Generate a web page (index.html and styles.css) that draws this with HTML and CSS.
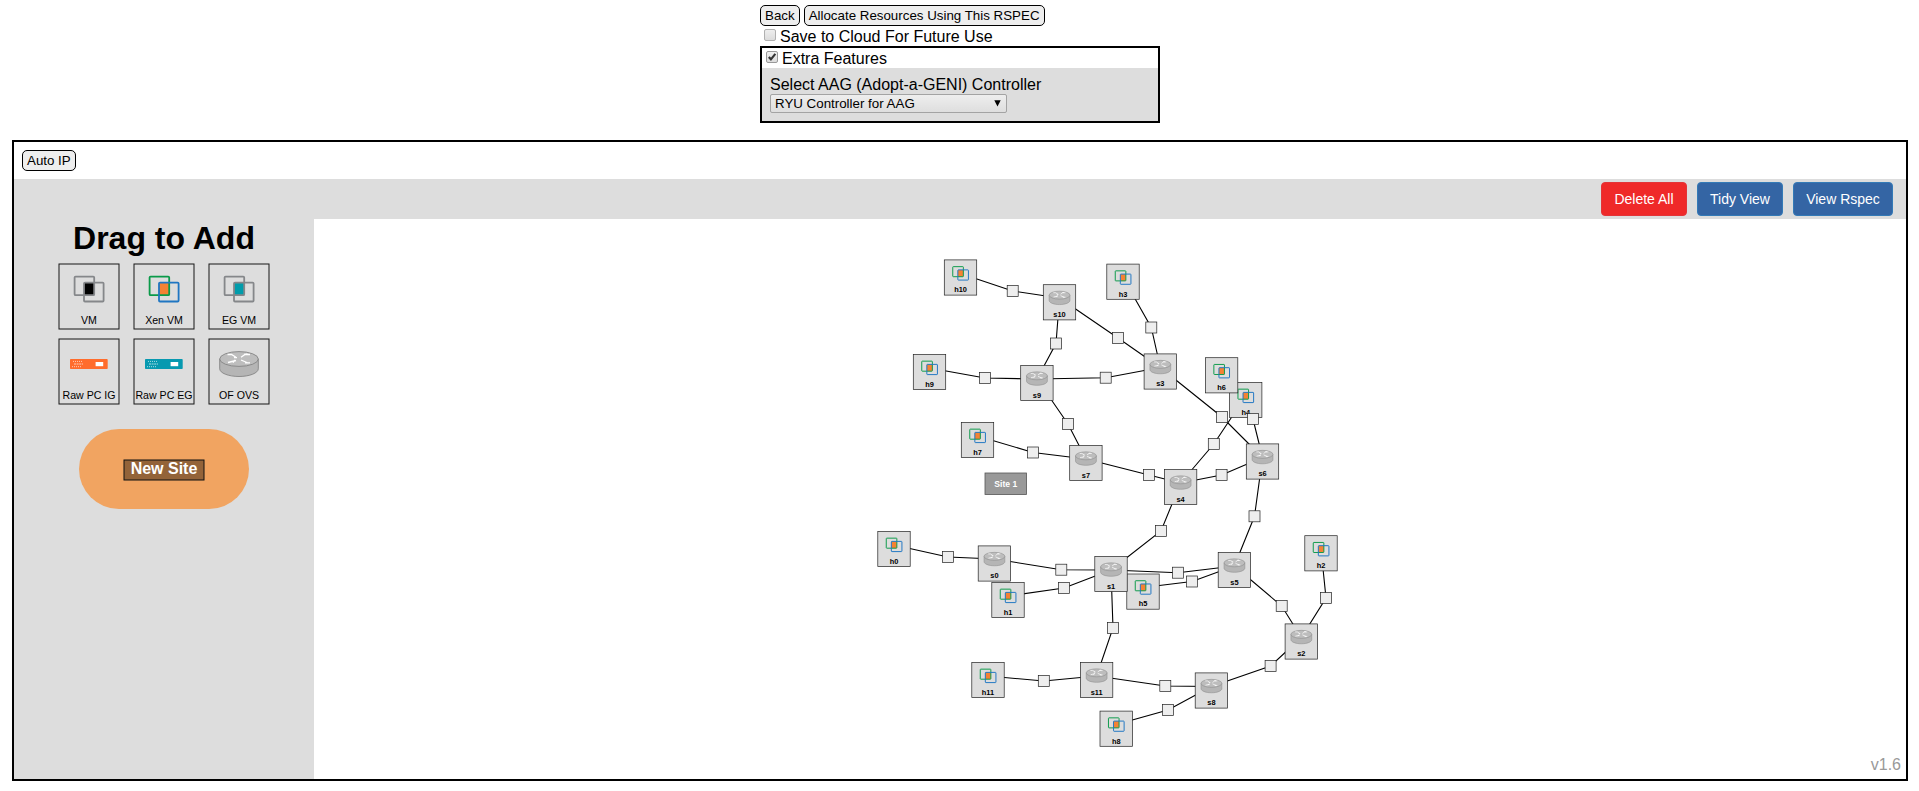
FILE: index.html
```html
<!DOCTYPE html>
<html lang="en">
<head>
<meta charset="utf-8">
<title>Topology Editor</title>
<link rel="stylesheet" href="styles.css">
</head>
<body>
<svg class="defs" aria-hidden="true">
  <defs>
    <g id="vm">
      <path d="M26 19.6h10.2v12.6H26z" fill="#000"/>
      <g fill="none" stroke="#85878a" stroke-width="1.8"><rect x="16.6" y="13.6" width="19.6" height="18.6" rx="1"/><rect x="26" y="19.6" width="19.6" height="18.9" rx="1"/></g>
    </g>
    <g id="egvm">
      <path d="M26 19.6h10.2v12.6H26z" fill="#009cab"/>
      <g fill="none" stroke="#85878a" stroke-width="1.8"><rect x="16.6" y="13.6" width="19.6" height="18.6" rx="1"/><rect x="26" y="19.6" width="19.6" height="18.9" rx="1"/></g>
    </g>
    <g id="xen">
      <path d="M26 19.6h10.2v12.6H26z" fill="#f58233"/>
      <g fill="none" stroke-width="1.8"><rect x="16.6" y="13.6" width="19.6" height="18.6" rx="1" stroke="#0a9a49"/><rect x="26" y="19.6" width="19.6" height="18.9" rx="1" stroke="#1f76c2"/></g>
    </g>
    <g id="rawpc">
      <rect x="12" y="21" width="37.7" height="10" rx=".8"/>
      <rect x="37.6" y="24" width="7.6" height="4.2" fill="#fff"/>
      <g stroke="#fff" stroke-width="1" opacity=".65"><path d="M15 23.4h9" stroke-dasharray="1 1"/><path d="M16 26h9" stroke-dasharray="2 .6"/><path d="M14 28.7h9" stroke-dasharray="1 1"/></g>
    </g>
    <g id="router">
      <path d="M11.7 21v9.8c0 4.2 8.7 7.7 19.3 7.7s19.3-3.500 19.300-7.700V21z" fill="#b5b5b5" stroke="#858585" stroke-width=".9"/>
      <ellipse cx="31" cy="21" rx="19.300" ry="7.400" fill="#bdbdbd" stroke="#858585" stroke-width=".9"/>
      <g fill="none" stroke="#fff" stroke-width="1.300"><path d="M19.500 16.500h4l4.500 2.800M26 19.600h3M42 16.500h-5l-4 2.800M39.500 16l-3.500.3M20 24.500l8-2M27 21.800l-2 2.800M33 22l7 3M42 24.800h-5"/></g>
    </g>
    <g id="host-node">
      <rect x="-16.200" y="-17.600" width="32.400" height="35.200" class="node-box"/>
      <use href="#xen" transform="translate(-16.700 -18.200) scale(.54)"/>
    </g>
    <g id="switch-node">
      <rect x="-16.200" y="-17.600" width="32.400" height="35.200" class="node-box"/>
      <use href="#router" transform="translate(-16.700 -18.500) scale(.54)"/>
    </g>
    <rect id="lk" x="-5.500" y="-5.500" width="11" height="11" class="link-box"/>
  </defs>
</svg>

<section class="options">
  <div class="actions"><button class="btn">Back</button><button class="btn">Allocate Resources Using This RSPEC</button></div>
  <label class="save"><span class="check"></span>Save to Cloud For Future Use</label>
  <div class="extra">
    <label class="extra-head"><span class="check"><svg viewBox="0 0 12 12"><path d="M2.200 6l2.500 2.800L10 2.200" fill="none" stroke="#333" stroke-width="2.600"/></svg></span>Extra Features</label>
    <div class="extra-body">
      <div class="extra-title">Select AAG (Adopt-a-GENI) Controller</div>
      <div class="select"><span>RYU Controller for AAG</span><svg width="7" height="7" viewBox="0 0 7 7"><path d="M.3.3h6.400L3.500 6.500z"/></svg></div>
    </div>
  </div>
</section>

<main class="editor">
  <div class="auto"><button class="btn">Auto IP</button></div>
  <div class="toolbar">
    <button class="tool danger">Delete All</button>
    <button class="tool">Tidy View</button>
    <button class="tool wide">View Rspec</button>
  </div>
  <div class="work">
    <aside class="sidebar">
      <h1>Drag to Add</h1>
      <div class="palette">
        <svg class="tile" viewBox="0 0 62 67"><rect x="1" y="1" width="60" height="65"/><use href="#vm"/><text x="31" y="60.700">VM</text></svg>
        <svg class="tile" viewBox="0 0 62 67"><rect x="1" y="1" width="60" height="65"/><use href="#xen"/><text x="31" y="60.700">Xen VM</text></svg>
        <svg class="tile" viewBox="0 0 62 67"><rect x="1" y="1" width="60" height="65"/><use href="#egvm"/><text x="31" y="60.700">EG VM</text></svg>
        <svg class="tile" viewBox="0 0 62 67"><rect x="1" y="1" width="60" height="65"/><use href="#rawpc" fill="#ff6c2c"/><text x="31" y="60.700">Raw PC IG</text></svg>
        <svg class="tile" viewBox="0 0 62 67"><rect x="1" y="1" width="60" height="65"/><use href="#rawpc" fill="#0799b0"/><text x="31" y="60.700">Raw PC EG</text></svg>
        <svg class="tile" viewBox="0 0 62 67"><rect x="1" y="1" width="60" height="65"/><use href="#router"/><text x="31" y="60.700">OF OVS</text></svg>
      </div>
      <div class="site"><svg width="82" height="22" viewBox="0 0 82 22"><rect x="1" y="1" width="80" height="20"/><text x="41" y="14.500">New Site</text></svg></div>
    </aside>
    <div class="canvas">
      <svg class="graph" viewBox="314 219 1592 560">
        <g class="links">
          <path d="M960.500 273.500L1012.700 291L1059.500 298"/>
          <path d="M1059.500 298L1056 343.500L1037 379"/>
          <path d="M929.500 368L985 378L1037 379"/>
          <path d="M1037 379L1105.700 377.700L1160.300 367.500"/>
          <path d="M1059.500 298L1118 338L1160.300 367.500"/>
          <path d="M1123 277.500L1151.300 327.500L1160.300 367.500"/>
          <path d="M1037 379L1068 424L1086 459"/>
          <path d="M977.500 436L1033 452.500L1086 459"/>
          <path d="M1086 459L1149 475L1180.600 483"/>
          <path d="M1180.600 483L1221.600 475L1262.500 457.500"/>
          <path d="M1160.300 367.500L1222 417L1262.500 457.500"/>
          <path d="M1180.600 483L1213.800 444L1245.700 396"/>
          <path d="M1221.600 371L1253 419L1262.500 457.500"/>
          <path d="M1180.600 483L1161 531L1111 570"/>
          <path d="M1262.500 457.500L1254.500 516.300L1234.400 566"/>
          <path d="M894 545L948 557L994.400 559"/>
          <path d="M994.400 559L1061.300 569.700L1111 570"/>
          <path d="M1008 596L1064 588L1111 570"/>
          <path d="M1111 570L1178 572.700L1234.400 566"/>
          <path d="M1143 587.500L1192 581.500L1234.400 566"/>
          <path d="M1234.400 566L1281.700 606L1301.300 637.500"/>
          <path d="M1321 549L1326 598L1301.300 637.500"/>
          <path d="M1301.300 637.500L1270.600 666L1211.400 686.500"/>
          <path d="M1211.400 686.500L1165.300 686L1096.600 676"/>
          <path d="M1211.400 686.500L1168 710L1116.200 724.500"/>
          <path d="M1111 570L1113 628L1096.600 676"/>
          <path d="M988 676L1043.800 681L1096.600 676"/>
        </g>
        <g class="nodes">
          <g transform="translate(960.500 277.500)"><use href="#host-node"/><text y="14.900">h10</text></g>
          <g transform="translate(929.500 372)"><use href="#host-node"/><text y="14.900">h9</text></g>
          <g transform="translate(1123 281.700)"><use href="#host-node"/><text y="14.900">h3</text></g>
          <g transform="translate(1245.700 400)"><use href="#host-node"/><text y="14.900">h4</text></g>
          <g transform="translate(1221.600 375.300)"><use href="#host-node"/><text y="14.900">h6</text></g>
          <g transform="translate(977.500 440)"><use href="#host-node"/><text y="14.900">h7</text></g>
          <g transform="translate(894 549)"><use href="#host-node"/><text y="14.900">h0</text></g>
          <g transform="translate(1008 600)"><use href="#host-node"/><text y="14.900">h1</text></g>
          <g transform="translate(1143 591.600)"><use href="#host-node"/><text y="14.900">h5</text></g>
          <g transform="translate(1321 553.300)"><use href="#host-node"/><text y="14.900">h2</text></g>
          <g transform="translate(988 680)"><use href="#host-node"/><text y="14.900">h11</text></g>
          <g transform="translate(1116.200 728.700)"><use href="#host-node"/><text y="14.900">h8</text></g>
          <g transform="translate(1059.500 302.300)"><use href="#switch-node"/><text y="14.900">s10</text></g>
          <g transform="translate(1036.900 383)"><use href="#switch-node"/><text y="14.900">s9</text></g>
          <g transform="translate(1160.300 371.500)"><use href="#switch-node"/><text y="14.900">s3</text></g>
          <g transform="translate(1262.500 461.500)"><use href="#switch-node"/><text y="14.900">s6</text></g>
          <g transform="translate(1180.600 487)"><use href="#switch-node"/><text y="14.900">s4</text></g>
          <g transform="translate(1085.900 463)"><use href="#switch-node"/><text y="14.900">s7</text></g>
          <g transform="translate(994.400 563.500)"><use href="#switch-node"/><text y="14.900">s0</text></g>
          <g transform="translate(1111 574)"><use href="#switch-node"/><text y="14.900">s1</text></g>
          <g transform="translate(1234.400 570)"><use href="#switch-node"/><text y="14.900">s5</text></g>
          <g transform="translate(1301.300 641.500)"><use href="#switch-node"/><text y="14.900">s2</text></g>
          <g transform="translate(1096.600 680)"><use href="#switch-node"/><text y="14.900">s11</text></g>
          <g transform="translate(1211.400 690.500)"><use href="#switch-node"/><text y="14.900">s8</text></g>
        </g>
        <use href="#lk" x="1012.700" y="291"/><use href="#lk" x="1056" y="343.500"/><use href="#lk" x="985" y="378"/>
        <use href="#lk" x="1105.700" y="377.700"/><use href="#lk" x="1118" y="338"/><use href="#lk" x="1151.300" y="327.500"/>
        <use href="#lk" x="1068" y="424"/><use href="#lk" x="1033" y="452.500"/><use href="#lk" x="1149" y="475"/>
        <use href="#lk" x="1221.600" y="475"/><use href="#lk" x="1222" y="417"/><use href="#lk" x="1213.800" y="444"/>
        <use href="#lk" x="1253" y="419"/><use href="#lk" x="1161" y="531"/><use href="#lk" x="1254.500" y="516.300"/>
        <use href="#lk" x="948" y="557"/><use href="#lk" x="1061.300" y="569.700"/><use href="#lk" x="1064" y="588"/>
        <use href="#lk" x="1178" y="572.700"/><use href="#lk" x="1192" y="581.500"/><use href="#lk" x="1281.700" y="606"/>
        <use href="#lk" x="1326" y="598"/><use href="#lk" x="1270.600" y="666"/><use href="#lk" x="1165.300" y="686"/>
        <use href="#lk" x="1168" y="710"/><use href="#lk" x="1113" y="628"/><use href="#lk" x="1043.800" y="681"/>
        <rect class="site-box" x="985" y="473" width="41.500" height="21.500"/>
        <text class="site-name" x="1005.800" y="486.700">Site 1</text>
      </svg>
      <span class="version">v1.6</span>
    </div>
  </div>
</main>
</body>
</html>
```
FILE: styles.css
```css
* { box-sizing: border-box; }
html { height: 791px; overflow: hidden; }
body {
  margin: 0;
  padding: 5px 11px 10px 12px;
  height: 791px;
  overflow: hidden;
  display: flex;
  flex-direction: column;
  background: #fff;
  color: #000;
  font: 16px/18px "Liberation Sans", Arial, sans-serif;
}
.defs { position: absolute; width: 0; height: 0; }

.options { width: 400px; align-self: center; height: 135px; }
.actions { display: flex; gap: 4px; height: 21px; }
.btn {
  height: 21px;
  padding: 0 4px;
  border: 1px solid #000;
  border-radius: 5px;
  background: #eee;
  color: #000;
  font: 13.333px/17px "Liberation Sans", Arial, sans-serif;
  white-space: nowrap;
}
.save { display: flex; height: 20px; padding: 2px 0 0 4px; gap: 4px; }
.check {
  display: block;
  width: 12px;
  height: 12px;
  margin-top: 1px;
  border: 1px solid #b0b0b0;
  border-radius: 2px;
  background: linear-gradient(#eee, #dcdcdc);
}
.check svg { display: block; width: 10px; height: 10px; }
.extra { height: 77px; border: 2px solid #000; background: #ddd; }
.extra-head { display: flex; height: 20px; padding: 2px 0 0 4px; gap: 4px; background: #fff; }
.extra-head .check { margin-top: 1px; border-color: #999; }
.extra-body { padding: 8px; }
.select {
  display: flex;
  align-items: center;
  justify-content: space-between;
  width: 237px;
  height: 19px;
  padding: 0 5px 0 4px;
  border: 1px solid #a3a3a3;
  border-radius: 2px;
  background: linear-gradient(#eee, #dedede);
  font-size: 13.333px;
  line-height: 17px;
}

.editor { width: 1896px; height: 641px; border: 2px solid #000; display: flex; flex-direction: column; }
.auto { height: 37px; padding: 8px; display: flex; }
.toolbar { height: 40px; display: flex; justify-content: flex-end; gap: 10px; padding: 3px 13px 0 0; background: #ddd; }
.tool {
  width: 86px;
  height: 34px;
  padding: 0;
  border: 1px solid #337ab7;
  border-radius: 4px;
  background: #3465a4;
  color: #fff;
  font: 14px/20px "Liberation Sans", Arial, sans-serif;
}
.wide { width: 100px; }
.danger { background: #ef2929; border-color: #e33438; }
.work { flex: 1; display: flex; }
.sidebar { width: 300px; display: flex; flex-direction: column; align-items: center; background: #ddd; }
h1 { margin: 0; height: 44px; padding-top: 1px; font-size: 32px; line-height: 37px; }
.palette { display: grid; grid-template-columns: repeat(3, 62px); gap: 8px 13px; }
.tile { display: block; width: 62px; height: 67px; }
.tile > rect { fill: none; stroke: #000; stroke-opacity: .9; }
.tile text { font-size: 10.600px; text-anchor: middle; }
.site {
  display: flex;
  align-items: center;
  justify-content: center;
  width: 170px;
  height: 80px;
  margin-top: 24px;
  padding-top: 2px;
  border-radius: 40px;
  background: #f1a461;
}
.site rect { fill: #936339; stroke: #111; }
.site text { fill: #fff; font-size: 16px; font-weight: bold; text-anchor: middle; }
.canvas { position: relative; width: 1592px; height: 560px; }
.graph { display: block; width: 1592px; height: 560px; }
.links path { fill: none; stroke: #000; stroke-width: 1.100px; }
.node-box { fill: #ddd; stroke: #222; stroke-width: .7px; }
.link-box { fill: #eee; stroke: #222; stroke-width: .7px; }
.nodes text { font-size: 7.400px; font-weight: bold; text-anchor: middle; }
.site-box { fill: #999; stroke: #555; stroke-width: .8px; }
.site-name { fill: #fff; font-size: 8.600px; font-weight: bold; text-anchor: middle; }
.version { position: absolute; right: 5px; bottom: 5px; color: #999; }
```
